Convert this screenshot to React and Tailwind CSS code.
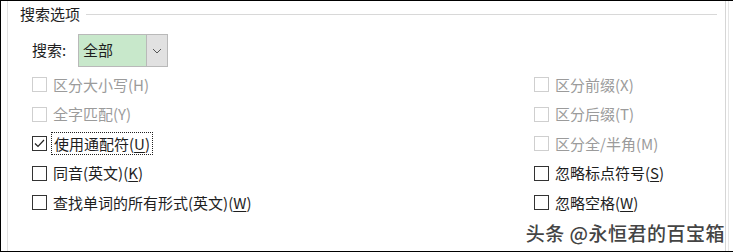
import React from 'react'

const left = [
  { label: '区分大小写(H)', disabled: true },
  { label: '全字匹配(Y)', disabled: true },
  { label: '使用通配符(', key: 'U', tail: ')', checked: true, focus: true },
  { label: '同音(英文)(', key: 'K', tail: ')' },
  { label: '查找单词的所有形式(英文)(', key: 'W', tail: ')' },
]

const right = [
  { label: '区分前缀(X)', disabled: true },
  { label: '区分后缀(T)', disabled: true },
  { label: '区分全/半角(M)', disabled: true },
  { label: '忽略标点符号(', key: 'S', tail: ')' },
  { label: '忽略空格(', key: 'W', tail: ')' },
]

function Box({ checked, disabled }) {
  return (
    <span
      className={
        'w-[15px] h-[15px] shrink-0 border flex items-center justify-center bg-white ' +
        (disabled ? 'border-[#cfcfcf]' : 'border-[#333333]')
      }
    >
      {checked && (
        <svg width="13" height="13" viewBox="0 0 13 13">
          <path d="M2 6.5 L5 9.5 L11 3" fill="none" stroke="#222" strokeWidth="1.2" />
        </svg>
      )}
    </span>
  )
}

function Option({ opt }) {
  const text = (
    <span className={opt.disabled ? 'text-[#9b9b9b]' : 'text-[#1e1e1e]'}>
      {opt.label}
      {opt.key && <span className="underline underline-offset-2">{opt.key}</span>}
      {opt.tail}
    </span>
  )
  return (
    <div className="h-[29.5px] flex items-center">
      <Box checked={opt.checked} disabled={opt.disabled} />
      {opt.focus ? (
        <span className="ml-[4px] px-[2px] py-[1px] border border-dotted border-[#222] leading-[19px]">{text}</span>
      ) : (
        <span className="ml-[6px] leading-[20px]">{text}</span>
      )}
    </div>
  )
}

export default function App() {
  return (
    <div
      className="w-[733px] h-[252px] bg-white border-t border-b border-l border-black relative flex text-[15px] overflow-hidden"
      style={{ fontFamily: '"Microsoft YaHei", "Noto Sans CJK SC", sans-serif' }}
    >
      <div className="w-[6px] shrink-0" />
      <div className="flex-1 border-l border-[#e2e2e2] flex flex-col">
        <div className="h-[26px] flex items-center pl-[12px] pr-[8px]">
          <span className="text-[#1e1e1e]">搜索选项</span>
          <div className="flex-1 h-px bg-[#d8d8d8] ml-[6px]" />
        </div>
        <div className="mt-[7px] h-[33px] flex items-center pl-[24px]">
          <span className="w-[46px] text-[#1e1e1e]">搜索:</span>
          <div className="h-[33px] flex border border-[#b9b9b9]">
            <div className="w-[67px] bg-[#c8e8cb] flex items-center pl-[4px] text-[#1e1e1e]">全部</div>
            <div className="w-[21px] bg-[#e1e1e1] border-l border-[#b9b9b9] flex items-center justify-center">
              <svg width="10" height="6" viewBox="0 0 10 6">
                <path d="M1 1 L5 5 L9 1" fill="none" stroke="#555" strokeWidth="1" />
              </svg>
            </div>
          </div>
        </div>
        <div className="mt-[3px] grid grid-cols-[502px_1fr] pl-[24px]">
          <div className="flex flex-col">
            {left.map((o, i) => (
              <Option key={i} opt={o} />
            ))}
          </div>
          <div className="flex flex-col">
            {right.map((o, i) => (
              <Option key={i} opt={o} />
            ))}
          </div>
        </div>
      </div>
      <div className="w-[8px] shrink-0 flex">
        <div className="w-px bg-[#d6d6d6]" />
        <div className="w-[2px]" />
        <div className="w-px bg-[#e6e6e6]" />
      </div>
      <div
        className="absolute right-[8px] bottom-[4px] text-[19px] font-medium tracking-[0.5px] text-[#444444]"
        style={{ textShadow: '0 0 2px #fff, 0 0 2px #fff' }}
      >
        头条 @永恒君的百宝箱
      </div>
    </div>
  )
}
